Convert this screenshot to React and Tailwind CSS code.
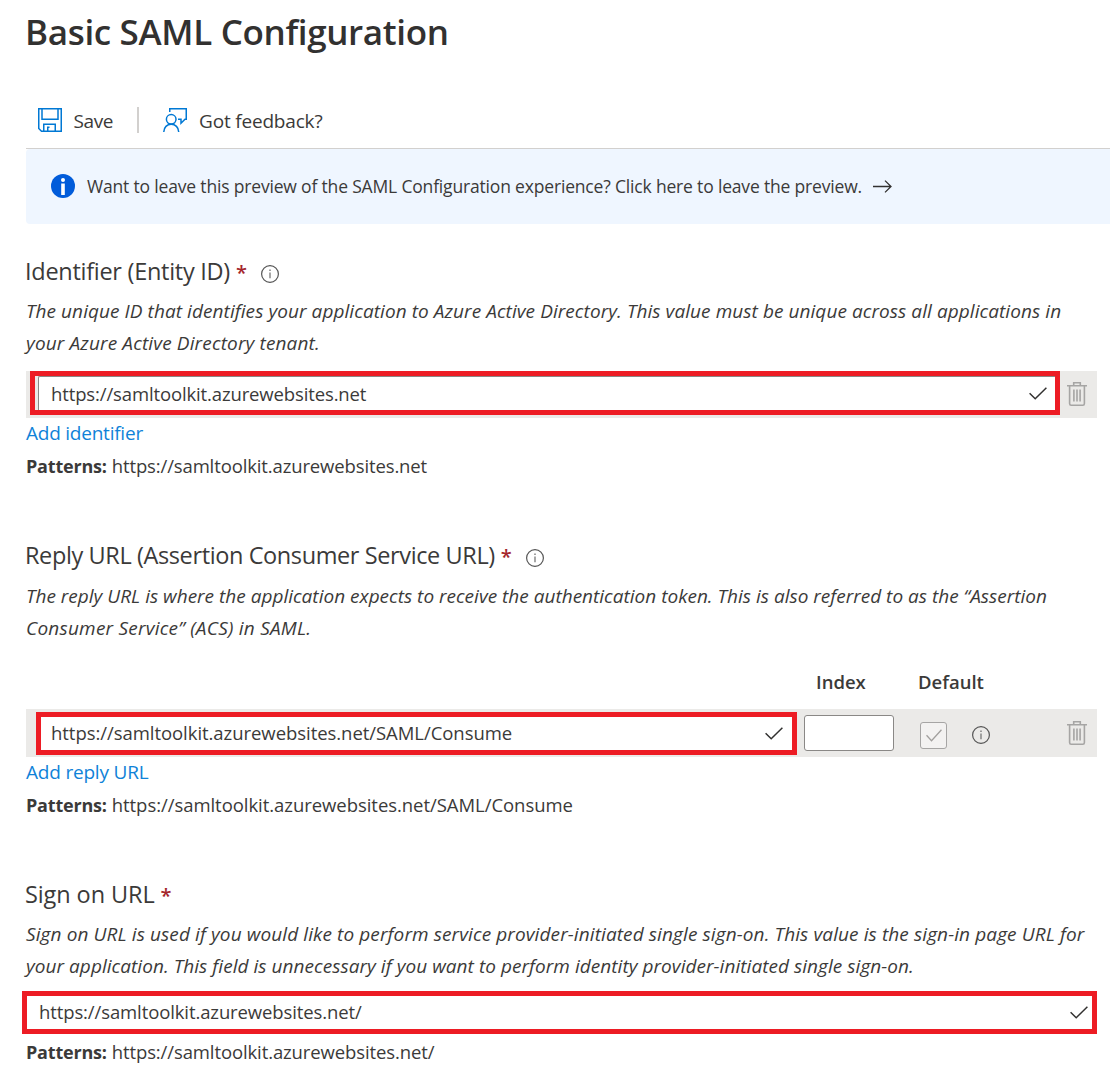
function SaveIcon() {
  return (
    <svg width="24" height="24" viewBox="0 0 24 24" fill="none" stroke="#0078d4" strokeWidth="1.5">
      <path d="M.75.75H23.25V23.25H3.5L.75 20.5Z" />
      <path d="M4 .75V11.25H20V.75" />
      <path d="M5.75 23.25V16.25H17.25V23.25" />
      <path d="M9.75 23.25V19.25H11.5" />
    </svg>
  );
}

function FeedbackIcon() {
  return (
    <svg width="24" height="24" viewBox="0 0 24 24" fill="none" stroke="#0078d4" strokeWidth="1.5">
      <path d="M6.75 4V.75H23.25V11.25H22L18 15.2V11.25H15" />
      <circle cx="8.2" cy="11.3" r="4.8" />
      <path d="M.75 24C.9 19.4 4 16.2 8.2 16.2S15.6 19.4 15.75 24" />
    </svg>
  );
}

function InfoBadge() {
  return (
    <svg width="24" height="24" viewBox="0 0 24 24" className="-mt-0.5 shrink-0">
      <circle cx="12" cy="12" r="12" fill="#015cda" />
      <circle cx="12" cy="6" r="2" fill="#fff" />
      <rect x="10.2" y="9.5" width="3.6" height="11.5" fill="#fff" />
    </svg>
  );
}

function InfoIcon({ className = "" }) {
  return (
    <svg width="18" height="18" viewBox="0 0 18 18" fill="none" stroke="#555" className={className}>
      <circle cx="9" cy="9" r="8.4" strokeWidth="1.2" />
      <path d="M9 7.5V13.2" strokeWidth="1.3" stroke="#777" />
      <path d="M9 4.5V6" strokeWidth="1.4" stroke="#777" />
    </svg>
  );
}

function Check({ className = "", color = "#323130", width = 18 }) {
  return (
    <svg width={width} height="13" viewBox="0 0 18 13" fill="none" stroke={color} strokeWidth="1.5" preserveAspectRatio="none" className={className}>
      <path d="M.6 6.3L6.2 11.7L17.4.7" />
    </svg>
  );
}

function Trash() {
  return (
    <svg width="20" height="24" viewBox="0 0 20 24" fill="none" stroke="#a6a5a4" strokeWidth="1.6">
      <path d="M0 3.8H20M6.7 3.8V.8H13.3V3.8" />
      <path d="M2.6 3.8V21.5Q2.6 23.2 4.2 23.2H15.8Q17.4 23.2 17.4 21.5V3.8" />
      <path d="M6.9 7.5V19.5M10 7.5V19.5M13.1 7.5V19.5" />
    </svg>
  );
}

function Arrow() {
  return (
    <svg width="19" height="13" viewBox="0 0 19 13" fill="none" stroke="#323130" strokeWidth="1.3" className="-mt-px ml-[11px]">
      <path d="M0 6.5H18M12 .6L18 6.5L12 12.4" />
    </svg>
  );
}

function Heading({ children, info, className }) {
  return (
    <div className="-ml-px flex h-8 items-center text-[23.5px] leading-8">
      <h2 className={className}>{children}</h2>
      <span className="mt-1 ml-1.5 text-[20px] font-semibold text-[#a4262c]">*</span>
      {info && <InfoIcon className="mt-1.5 ml-[14px]" />}
    </div>
  );
}

function Patterns({ children, className }) {
  return (
    <p className="flex h-6 items-center text-[18.5px] leading-6">
      <b className="mr-[5px] text-[18px] tracking-[-0.2px]">Patterns:</b>
      <span className={className}>{children}</span>
    </p>
  );
}

export default function App() {
  return (
    <main className="h-[1077px] w-[1110px] overflow-hidden bg-white pl-[26px] font-['Open_Sans',sans-serif] text-[#3b3a39]">
      <h1 className="-ml-px h-[93px] pt-[7px] text-[35px] leading-[50px] font-[560] tracking-[-0.34px] text-[#323130]">Basic SAML Configuration</h1>

      <div className="flex h-14 items-center border-b border-[#d2d0ce] pl-3 text-[19px] leading-6">
        <span className="-mt-0.5">
          <SaveIcon />
        </span>
        <span className="ml-[11.5px] w-[40.5px] tracking-[-0.4px]">Save</span>
        <span className="-mt-0.5 ml-[23px] h-[26px] w-0.5 bg-[#d2d0ce]" />
        <span className="-mt-0.5 ml-6">
          <FeedbackIcon />
        </span>
        <span className="ml-3 tracking-[-0.18px]">Got feedback?</span>
      </div>

      <div className="flex h-[75px] items-center rounded-l bg-[#eff6ff] pl-[25px] text-[17.5px]">
        <InfoBadge />
        <span className="ml-3 tracking-[-0.175px] whitespace-nowrap">Want to leave this preview of the SAML Configuration experience? Click here to leave the preview.</span>
        <Arrow />
      </div>

      <section className="h-[315px] pt-[31px]">
        <Heading info className="tracking-[-0.28px]">Identifier (Entity ID)</Heading>
        <div className="mt-2 text-[19px] leading-8 whitespace-nowrap italic">
          <p className="tracking-[0.07px]">The unique ID that identifies your application to Azure Active Directory. This value must be unique across all applications in</p>
          <p className="tracking-[0.145px]">your Azure Active Directory tenant.</p>
        </div>
        <div className="mt-3 flex h-[47px] w-[1071px] items-start bg-[#ebeae8] pl-1">
          <div className="h-11 w-[1030px] border-5 border-[#ed1c24] pl-[3px]">
            <div className="flex h-[34px] items-center justify-between rounded-tl-xs border-t border-l border-[#8a8886] bg-white pr-2 pl-3">
              <span className="text-[18.5px] tracking-[-0.13px]">https://samltoolkit.azurewebsites.net</span>
              <Check />
            </div>
          </div>
          <div className="mt-[11px] ml-[7px]">
            <Trash />
          </div>
        </div>
        <a className="mt-[3px] block h-6 text-[19px] leading-6 tracking-[-0.23px] text-[#0f82d8]">Add identifier</a>
        <div className="mt-[9px]">
          <Patterns className="tracking-[-0.13px]">https://samltoolkit.azurewebsites.net</Patterns>
        </div>
      </section>

      <section className="h-[339px]">
        <Heading info className="tracking-[-0.39px]">Reply URL (Assertion Consumer Service URL)</Heading>
        <div className="mt-[9px] text-[19px] leading-8 whitespace-nowrap italic">
          <p className="tracking-[0.007px]">The reply URL is where the application expects to receive the authentication token. This is also referred to as the “Assertion</p>
          <p className="tracking-[0.23px]">Consumer Service” (ACS) in SAML.</p>
        </div>
        <div className="mt-[26px] flex h-6 text-[18.5px] leading-6 font-[560]">
          <span className="ml-[790px] w-[102px]">Index</span>
          <span>Default</span>
        </div>
        <div className="mt-[15px] flex h-12 w-[1071px] items-center bg-[#ebeae8] pl-2.5">
          <div className="mt-px flex h-[43px] w-[761px] items-center justify-between border-5 border-[#ed1c24] bg-white pr-[9px] pb-px pl-2.5">
            <span className="text-[18.5px] tracking-[-0.05px]">https://samltoolkit.azurewebsites.net/SAML/Consume</span>
            <Check />
          </div>
          <div className="ml-[7px] h-9 w-[90px] rounded-[3px] border border-[#8a8886] bg-white" />
          <div className="mt-[5px] ml-[26px] flex size-[27px] items-center justify-center rounded-[3px] border border-[#a6a5a4] bg-[#f3f2f1]">
            <Check color="#a19f9d" width={16} />
          </div>
          <InfoIcon className="mt-[3px] ml-[25px]" />
          <div className="ml-[77px]">
            <Trash />
          </div>
        </div>
        <a className="mt-[3px] block h-6 text-[19px] leading-6 tracking-[-0.2px] text-[#0f82d8]">Add reply URL</a>
        <div className="mt-[9px]">
          <Patterns className="tracking-[-0.05px]">https://samltoolkit.azurewebsites.net/SAML/Consume</Patterns>
        </div>
      </section>

      <section>
        <Heading className="tracking-[-0.1px]">Sign on URL</Heading>
        <div className="mt-2 text-[19px] leading-8 whitespace-nowrap italic">
          <p className="tracking-[0.104px]">Sign on URL is used if you would like to perform service provider-initiated single sign-on. This value is the sign-in page URL for</p>
          <p className="tracking-[0.048px]">your application. This field is unnecessary if you want to perform identity provider-initiated single sign-on.</p>
        </div>
        <div className="mt-[9px] -ml-1 flex h-[43px] w-[1075px] items-center justify-between border-5 border-[#ed1c24] bg-white pr-1 pb-px pl-3">
          <span className="text-[18.5px] tracking-[-0.11px]">https://samltoolkit.azurewebsites.net/</span>
          <Check />
        </div>
        <div className="mt-[6px]">
          <Patterns className="tracking-[-0.11px]">https://samltoolkit.azurewebsites.net/</Patterns>
        </div>
      </section>
    </main>
  );
}
